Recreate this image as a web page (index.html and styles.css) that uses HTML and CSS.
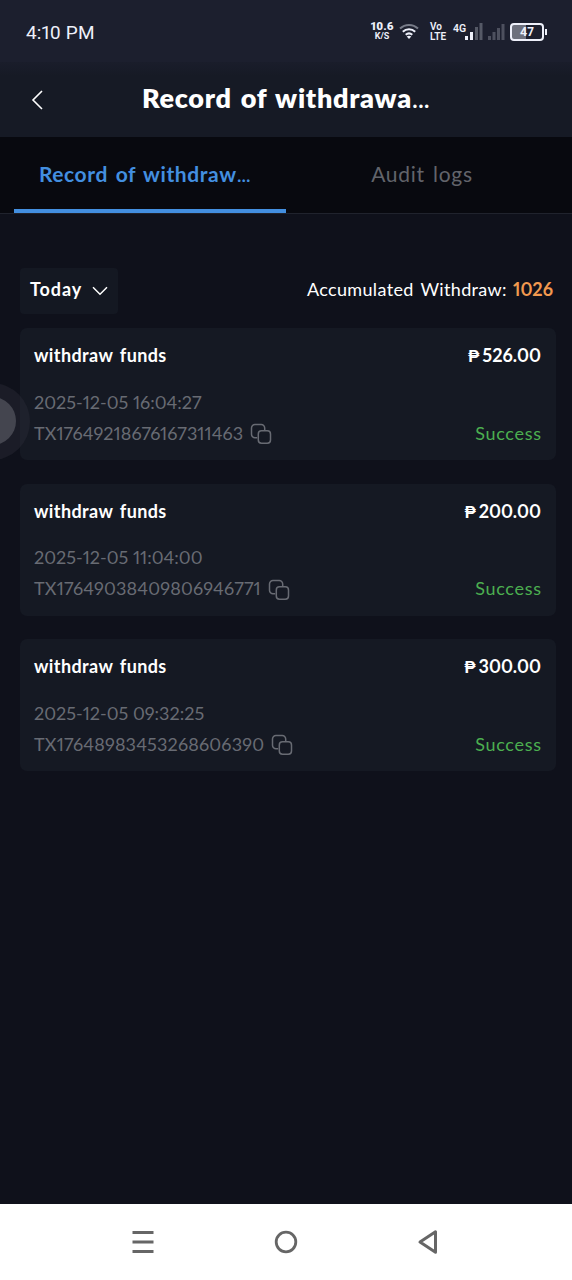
FILE: index.html
```html
<!DOCTYPE html>
<html lang="en">
<head>
<meta charset="utf-8">
<title>Record of withdrawal</title>
<link rel="stylesheet" href="styles.css">
</head>
<body>
<svg width="0" height="0" class="defs">
  <symbol id="copy" viewBox="0 0 22 22"><path d="M7.200 14.700H5a3.500 3.500 0 0 1-3.500-3.500V5A3.500 3.500 0 0 1 5 1.500h6.200a3.500 3.500 0 0 1 3.500 3.500v2.200"/><rect x="8.300" y="7.700" width="12.200" height="12.500" rx="3.200"/></symbol>
</svg>
<div class="phone">
  <div class="status">
    <span class="clock">4:10 PM</span>
    <div class="speed"><b>10.6</b><span>K/S</span></div>
    <svg class="wifi" width="20" height="18" viewBox="0 0 20 18"><g fill="none" stroke-width="2"><path stroke="#777b88" d="M1 6.500a13 13 0 0 1 18 0"/><path stroke="#eef0fa" d="M3.800 9.800a9 9 0 0 1 12.400 0M6.700 12.800a5 5 0 0 1 6.600 0"/></g><path fill="#eef0fa" d="M7.700 14.600q2.300-1.500 4.600 0L10 17z"/></svg>
    <div class="volte"><span>Vo</span><span>LTE</span></div>
    <span class="net">4G</span>
    <svg class="bars" width="18" height="18" viewBox="0 0 18 18"><path fill="#eef0fa" d="M0 13h3v4H0zM5 9h3v8H5z"/><path fill="#555966" d="M10 4h3v13h-3zM14.500 0h3v17h-3z"/></svg>
    <svg class="bars2" width="17" height="18" viewBox="0 0 17 18"><path fill="#4d505e" d="M0 13h3v4H0zM4.500 9h3v8h-3zM9 5h3v12H9zM13.500 1h3v16h-3z"/></svg>
    <div class="battery"><span>47</span></div>
  </div>
  <header class="header">
    <svg width="14" height="20" viewBox="0 0 14 20"><path d="M12 1L3 10l9 9" fill="none" stroke="#fff" stroke-width="1.600"/></svg>
    <h1>Record of withdrawa<i>...</i></h1>
  </header>
  <nav class="tabs">
    <div class="tab on"><span>Record of withdraw<i>...</i></span></div>
    <div class="tab"><span>Audit logs</span></div>
  </nav>
  <main>
    <div class="filter">
      <div class="pick"><span>Today</span><svg width="16" height="10" viewBox="0 0 16 10"><path d="M1 1.200l7 7 7-7" fill="none" stroke="#fff" stroke-width="1.500"/></svg></div>
      <p class="total"><span>Accumulated Withdraw:</span><b>1026</b></p>
    </div>
    <section class="card">
      <div class="row head"><b>withdraw funds</b><span class="sum"><i>₱</i>526.00</span></div>
      <div class="row date"><span>2025-12-05 16:04:27</span></div>
      <div class="row tx"><span class="id1">TX17649218676167311463</span><svg class="copy"><use href="#copy"/></svg><span class="ok">Success</span></div>
    </section>
    <section class="card">
      <div class="row head"><b>withdraw funds</b><span class="sum"><i>₱</i>200.00</span></div>
      <div class="row date"><span>2025-12-05 11:04:00</span></div>
      <div class="row tx"><span class="id2">TX17649038409806946771</span><svg class="copy"><use href="#copy"/></svg><span class="ok">Success</span></div>
    </section>
    <section class="card">
      <div class="row head"><b>withdraw funds</b><span class="sum"><i>₱</i>300.00</span></div>
      <div class="row date"><span>2025-12-05 09:32:25</span></div>
      <div class="row tx"><span class="id2">TX17648983453268606390</span><svg class="copy"><use href="#copy"/></svg><span class="ok">Success</span></div>
    </section>
  </main>
  <footer class="nav">
    <svg width="22" height="24" viewBox="0 0 22 24"><path d="M.5 2.500h21M.5 12h21M.5 21.500h21" stroke="#666" stroke-width="3"/></svg>
    <svg width="24" height="24" viewBox="0 0 24 24"><circle cx="12" cy="12" r="9.800" fill="none" stroke="#666" stroke-width="2.800"/></svg>
    <svg width="22" height="26" viewBox="0 0 22 26"><path d="M3 13L18.500 2.800v20.400z" fill="none" stroke="#666" stroke-width="3" stroke-linejoin="round"/></svg>
  </footer>
  <div class="floater"></div>
</div>
</body>
</html>
```

FILE: styles.css
```css
* { box-sizing: border-box; }
body { margin: 0; background: #0f111b; color: #fff; font-family: Lato, "Open Sans", sans-serif; font-feature-settings: "pnum"; }
.defs { position: absolute; }
i { font-style: normal; }
.phone { position: relative; width: 572px; height: 1280px; overflow: hidden; display: flex; flex-direction: column; }
.status { height: 62px; flex: none; background: #1c1f2e; display: flex; align-items: flex-start; padding: 21px 0 0 26px; font-family: Roboto, sans-serif; color: #eef0fa; }
.clock { font-size: 19px; line-height: 23px; width: 345px; letter-spacing: .1px; }
.speed { width: 22px; display: flex; flex-direction: column; align-items: center; font-size: 9px; line-height: 9px; font-weight: 700; }
.speed b { font-size: 11.500px; line-height: 11px; }
.wifi { margin: 1px 0 0 6px; }
.volte { margin: 1px 0 0 11px; width: 17px; font-size: 10px; line-height: 10px; font-weight: 600; display: flex; flex-direction: column; }
.net { margin: 2px 0 0 6px; width: 12px; font-size: 10.500px; line-height: 11px; font-weight: 600; }
.bars { margin: 2px 0 0 0; }
.bars2 { margin: 2px 0 0 5px; }
.battery { position: relative; margin: 2px 0 0 5px; width: 34px; height: 18px; border: 2px solid #eef0fa; border-radius: 4px; background: linear-gradient(90deg, #6d707d 47%, #1c1f2e 47%); font-size: 12.500px; line-height: 14px; font-weight: 700; text-align: center; }
.battery::after { content: ""; position: absolute; right: -5px; top: 4px; width: 2px; height: 6px; background: #eef0fa; }
.header { height: 75px; flex: none; background: linear-gradient(#1a1d2b, #161a25 14px); display: flex; align-items: center; padding: 0 30px; }
.header h1 { margin: 0 0 4px 98px; font-size: 27px; line-height: 36px; font-weight: 800; white-space: nowrap; letter-spacing: .7px; word-spacing: 2px; }
.header h1 i { font-weight: 400; letter-spacing: -.5px; }
.tabs { height: 77px; flex: none; background: #08090f; display: flex; border-bottom: 1px solid #20232d; padding: 0 14px; }
.tab { width: 272px; height: 76px; padding-top: 24px; text-align: center; font-size: 21px; line-height: 26px; color: #62646b; white-space: nowrap; letter-spacing: .75px; word-spacing: 2px; }
.tab.on { color: #438fe0; font-weight: 700; border-bottom: 4px solid #438fe0; padding-right: 11px; letter-spacing: .6px; }
.tab i { font-weight: 400; letter-spacing: -.5px; }
main { flex: 1; padding: 54px 16px 0 20px; }
.filter { display: flex; justify-content: space-between; height: 46px; margin-bottom: 14px; }
.pick { width: 98px; height: 46px; padding: 0 10px 4px; display: flex; align-items: center; justify-content: space-between; background: #141822; border-radius: 4px; font-size: 18px; font-weight: 700; letter-spacing: .9px; }
.pick svg { margin-top: 3px; }
.total { margin: 0; padding-right: 3px; font-size: 18px; line-height: 43px; white-space: nowrap; letter-spacing: .35px; word-spacing: 2px; }
.total b { color: #f2994f; margin-left: 6px; letter-spacing: 0; }
.card { height: 132px; margin-bottom: 23.500px; padding: 15px 15px 0 14px; background: #151923; border-radius: 7px; }
.row { display: flex; align-items: center; font-size: 18px; line-height: 24px; height: 24px; white-space: nowrap; }
.head { justify-content: space-between; }
.head b { letter-spacing: .4px; word-spacing: 2px; }
.sum { font-weight: 700; }
.sum i { margin-right: 3px; font-family: "Open Sans", sans-serif; font-weight: 800; font-size: 16.500px; line-height: 20px; }
.date { margin-top: 22.500px; color: #686b73; }
.tx { margin-top: 7.400px; color: #686b73; }
.id1 { letter-spacing: .06px; }
.id2 { letter-spacing: .16px; }
.copy { width: 22px; height: 22px; margin: 3px 0 0 7px; fill: none; stroke: #686b73; stroke-width: 1.500; }
.ok { margin-left: auto; margin-right: -.7px; letter-spacing: .7px; color: #4caf50; }
.nav { height: 76px; flex: none; background: #fff; display: flex; justify-content: space-between; align-items: center; padding: 0 133px 0 132px; }
.floater { position: absolute; left: -60px; top: 383px; width: 90px; height: 77px; border-radius: 39px; background: rgba(45,46,57,.4); }
.floater::after { content: ""; position: absolute; right: 14px; top: 14px; width: 48px; height: 48px; border-radius: 50%; background: #44454f; }
```
